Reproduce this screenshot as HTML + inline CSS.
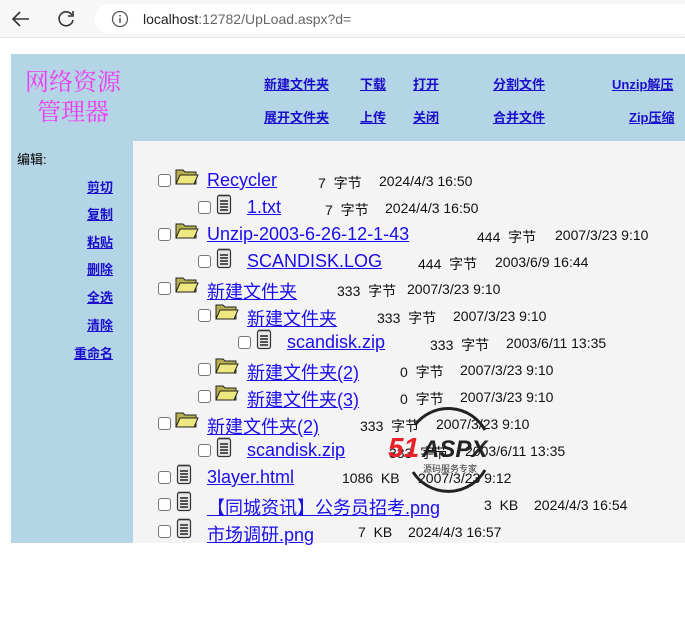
<!DOCTYPE html>
<html><head><meta charset="utf-8"><style>
*{margin:0;padding:0;box-sizing:border-box}
body{width:685px;height:631px;background:#fff;position:relative;overflow:hidden;font-family:"Liberation Sans","Noto Sans CJK SC",sans-serif}
.a{position:absolute;white-space:nowrap}
.bar{left:0;top:0;width:685px;height:38px;background:#f7f7f7}
.pill{left:95px;top:4px;width:600px;height:30px;background:#fff;border-radius:15px}
.panel{left:11px;top:54px;width:674px;height:489px;background:#b4d5e5}
.content{left:133px;top:141px;width:552px;height:402px;background:#f4f4f4}
.nav{font-size:13px;font-weight:bold;color:#1a0dcc;text-decoration:underline}
.side{font-size:13px;font-weight:bold;color:#1a0dcc;text-decoration:underline;right:572px}
.cb{width:13px;height:13px;border:1px solid #767676;border-radius:3px;background:#fff}
.ln{font-size:18px;color:#1a0dee;text-decoration:underline}
.m{font-size:14px;color:#111}
</style></head><body>
<div class="a bar"></div>
<div class="a pill"></div>
<svg class="a" style="left:10px;top:8px" width="22" height="22" viewBox="0 0 22 22"><path d="M19 11H4M10 4l-7 7 7 7" fill="none" stroke="#333" stroke-width="1.6"/></svg>
<svg class="a" style="left:55px;top:8px" width="22" height="22" viewBox="0 0 22 22"><path d="M17 7A7 7 0 1 0 18 12" fill="none" stroke="#333" stroke-width="1.6"/><path d="M18 3v5h-5" fill="none" stroke="#333" stroke-width="1.6"/></svg>
<svg class="a" style="left:111px;top:10px" width="18" height="18" viewBox="0 0 18 18"><circle cx="9" cy="9" r="7.5" fill="none" stroke="#555" stroke-width="1.3"/><path d="M9 8v5M9 5v1.5" stroke="#555" stroke-width="1.5"/></svg>
<div class="a" style="left:143px;top:11px;font-size:14px;color:#222">localhost<span style="color:#666">:12782/UpLoad.aspx?d=</span></div>
<div class="a" style="left:0;top:37px;width:685px;height:1px;background:#e4e4e4"></div>
<div class="a panel"></div>
<div class="a content"></div>
<div class="a" style="left:20px;top:68px;font-size:24px;color:#f03cf0;line-height:30px;text-align:center;width:106px;font-family:'Liberation Serif','Noto Serif CJK SC',serif">网络资源<br>管理器</div>
<div class="a nav" style="left:264px;top:74px">新建文件夹</div>
<div class="a nav" style="left:360px;top:74px">下载</div>
<div class="a nav" style="left:413px;top:74px">打开</div>
<div class="a nav" style="left:493px;top:74px">分割文件</div>
<div class="a nav" style="left:612px;top:74px">Unzip解压</div>
<div class="a nav" style="left:264px;top:107px">展开文件夹</div>
<div class="a nav" style="left:360px;top:107px">上传</div>
<div class="a nav" style="left:413px;top:107px">关闭</div>
<div class="a nav" style="left:493px;top:107px">合并文件</div>
<div class="a nav" style="left:629px;top:107px">Zip压缩</div>
<div class="a" style="left:17px;top:149px;font-size:13px;color:#000">编辑:</div>
<div class="a side" style="top:177px">剪切</div>
<div class="a side" style="top:204px">复制</div>
<div class="a side" style="top:232px">粘贴</div>
<div class="a side" style="top:259px">删除</div>
<div class="a side" style="top:287px">全选</div>
<div class="a side" style="top:315px">清除</div>
<div class="a side" style="top:343px">重命名</div>
<svg width="0" height="0" style="position:absolute"><defs>
<g id="fo"><path d="M1 4h7l2 2h11v12H1z" fill="#b8b050" stroke="#222" stroke-width="1"/><path d="M1 18l4-9h18l-4 9z" fill="#eee880" stroke="#222" stroke-width="1"/></g>
<g id="fi"><rect x="2.5" y="2.5" width="13" height="18" rx="2" fill="#e8e8e8" stroke="#333" stroke-width="1.2"/><path d="M4 1.5v2M6 1.5v2M8 1.5v2M10 1.5v2M12 1.5v2M14 1.5v2" stroke="#333"/><path d="M5 8h8M5 11h8M5 14h8M5 17h8" stroke="#222" stroke-width="1.5"/></g>
</defs></svg>
<div id="rows"></div>
<script>
var R=[[0,'f','Recycler',318,'7 字节',379,'2024/4/3 16:50'],
[1,'t','1.txt',325,'7 字节',385,'2024/4/3 16:50'],
[0,'f','Unzip-2003-6-26-12-1-43',477,'444 字节',555,'2007/3/23 9:10'],
[1,'t','SCANDISK.LOG',418,'444 字节',495,'2003/6/9 16:44'],
[0,'f','新建文件夹',337,'333 字节',407,'2007/3/23 9:10'],
[1,'f','新建文件夹',377,'333 字节',453,'2007/3/23 9:10'],
[2,'t','scandisk.zip',430,'333 字节',506,'2003/6/11 13:35'],
[1,'f','新建文件夹(2)',400,'0 字节',460,'2007/3/23 9:10'],
[1,'f','新建文件夹(3)',400,'0 字节',460,'2007/3/23 9:10'],
[0,'f','新建文件夹(2)',360,'333 字节',436,'2007/3/23 9:10'],
[1,'t','scandisk.zip',389,'333 字节',465,'2003/6/11 13:35'],
[0,'t','3layer.html',342,'1086 KB',418,'2007/3/23 9:12'],
[0,'t','【同城资讯】公务员招考.png',484,'3 KB',534,'2024/4/3 16:54'],
[0,'t','市场调研.png',358,'7 KB',408,'2024/4/3 16:57']];
var h='';
R.forEach(function(r,i){var y=180+i*27,x=158+r[0]*40;
h+='<div class="a cb" style="left:'+x+'px;top:'+(y-6)+'px"></div>';
h+='<svg class="a" style="left:'+(x+17)+'px;top:'+(y-14)+'px" width="24" height="22"><use href="#'+(r[1]=='f'?'fo':'fi')+'"/></svg>';
h+='<div class="a ln" style="left:'+(x+49)+'px;top:'+(y-10)+'px">'+r[2]+'</div>';
h+='<div class="a m" style="left:'+r[3]+'px;top:'+(y-7)+'px">'+r[4].replace(' ','&nbsp; ')+'</div>';
h+='<div class="a m" style="left:'+r[5]+'px;top:'+(y-7)+'px">'+r[6]+'</div>';});
document.getElementById('rows').innerHTML=h;
</script>
<svg class="a" style="left:385px;top:400px" width="125" height="100" viewBox="0 0 125 100"><path d="M30 25A42 42 0 0 1 100 30M100 70A42 42 0 0 1 28 72" fill="none" stroke="#222" stroke-width="3"/>
<text x="3" y="57" font-family="Liberation Sans" font-weight="bold" font-style="italic" font-size="28" fill="#e8202a">51</text>
<text x="37" y="57" font-family="Liberation Sans" font-weight="bold" font-style="italic" font-size="24" fill="#222">ASPX</text>
<text x="38" y="72" font-family="Noto Sans CJK SC" font-size="9" fill="#333">源码服务专家</text></svg>
</body></html>
